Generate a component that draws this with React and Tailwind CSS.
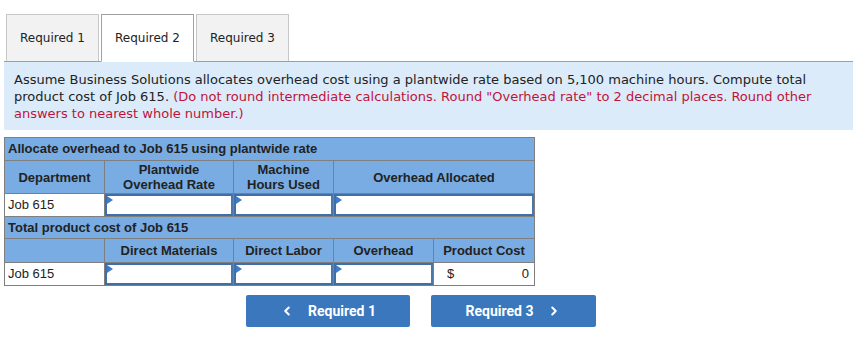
import { ChevronLeft, ChevronRight } from 'lucide-react'

const Tab = ({ label, active }) => (
  <div
    className={`w-[93px] flex items-center justify-center text-[12px] text-[#222] border ${
      active
        ? 'h-[48px] pb-px bg-white border-[#a0a0a0] border-b-white -mb-px'
        : 'h-[47px] bg-[#f2f2f2] border-[#c8c8c8] border-b-0'
    }`}
  >
    {label}
  </div>
)

const InputCell = ({ colSpan }) => (
  <td colSpan={colSpan} className="border border-[#7f7f7f] p-0 bg-white h-[23px]">
    <div className="relative h-[22px] border-2 border-[#3f6fa6] border-r-[#4a78ad] bg-white">
      <span className="absolute left-0 top-0 w-0 h-0 border-t-[4px] border-b-[4px] border-l-[6px] border-t-transparent border-b-transparent border-l-[#3d7cc9]" />
    </div>
  </td>
)

const App = () => {
  return (
    <div className="w-[853px] h-[342px] bg-white pt-[14px]" style={{ fontFamily: 'Verdana, "DejaVu Sans", sans-serif' }}>
      <div className="flex gap-[2px] border-b border-[#a0a0a0] ml-[4px] pl-[2px]">
        <Tab label="Required 1" />
        <Tab label="Required 2" active />
        <Tab label="Required 3" />
      </div>

      <div className="ml-[4px] bg-[#dcebf9] h-[68px] pl-[10px] pt-[9px] pr-[20px] text-[13px] leading-[17px] text-[#222]">
        Assume Business Solutions allocates overhead cost using a plantwide rate based on 5,100 machine hours. Compute total
        product cost of Job 615.{' '}
        <span className="text-[#c0133b]">
          (Do not round intermediate calculations. Round "Overhead rate" to 2 decimal places. Round other answers to nearest whole number.)
        </span>
      </div>

      <table
        className="ml-[4px] mt-[7px] border-collapse text-[13px] text-[#222]"
        style={{ fontFamily: '"Liberation Sans", Arial, sans-serif' }}
      >
        <colgroup>
          <col className="w-[100px]" />
          <col className="w-[129px]" />
          <col className="w-[100px]" />
          <col className="w-[100px]" />
          <col className="w-[101px]" />
        </colgroup>
        <tbody>
          <tr className="bg-[#78ace3] h-[23px]">
            <td colSpan={5} className="border border-[#7f7f7f] px-[3px] font-bold">
              Allocate overhead to Job 615 using plantwide rate
            </td>
          </tr>
          <tr className="bg-[#78ace3] h-[33px] font-bold text-center leading-[15px]">
            <td className="border border-[#7f7f7f]">Department</td>
            <td className="border border-[#7f7f7f]">
              Plantwide
              <br />
              Overhead Rate
            </td>
            <td className="border border-[#7f7f7f]">
              Machine
              <br />
              Hours Used
            </td>
            <td colSpan={2} className="border border-[#7f7f7f]">Overhead Allocated</td>
          </tr>
          <tr className="h-[23px]">
            <td className="border border-[#7f7f7f] px-[3px] bg-white">Job 615</td>
            <InputCell />
            <InputCell />
            <InputCell colSpan={2} />
          </tr>
          <tr className="bg-[#78ace3] h-[22px]">
            <td colSpan={5} className="border border-[#7f7f7f] px-[3px] font-bold">
              Total product cost of Job 615
            </td>
          </tr>
          <tr className="bg-[#78ace3] h-[24px] font-bold text-center">
            <td className="border border-[#7f7f7f]"></td>
            <td className="border border-[#7f7f7f]">Direct Materials</td>
            <td className="border border-[#7f7f7f]">Direct Labor</td>
            <td className="border border-[#7f7f7f]">Overhead</td>
            <td className="border border-[#7f7f7f]">Product Cost</td>
          </tr>
          <tr className="h-[23px]">
            <td className="border border-[#7f7f7f] px-[3px] bg-white">Job 615</td>
            <InputCell />
            <InputCell />
            <InputCell />
            <td className="border border-[#7f7f7f] bg-white px-[5px]">
              <div className="flex justify-between pl-[8px]">
                <span>$</span>
                <span>0</span>
              </div>
            </td>
          </tr>
        </tbody>
      </table>

      <div
        className="flex gap-[21px] ml-[246px] mt-[9px] text-white text-[14px] font-bold"
        style={{ fontFamily: 'Roboto, "Liberation Sans", Arial, sans-serif' }}
      >
        <button className="w-[164px] h-[32px] bg-[#3a77bc] rounded-[2px] flex items-center justify-center gap-[14px]">
          <ChevronLeft className="w-[14px] h-[14px]" strokeWidth={3.5} />
          <span>Required 1</span>
        </button>
        <button className="w-[165px] h-[32px] bg-[#3a77bc] rounded-[2px] flex items-center justify-center gap-[14px]">
          <span>Required 3</span>
          <ChevronRight className="w-[14px] h-[14px]" strokeWidth={3.5} />
        </button>
      </div>
    </div>
  )
}

export default App
